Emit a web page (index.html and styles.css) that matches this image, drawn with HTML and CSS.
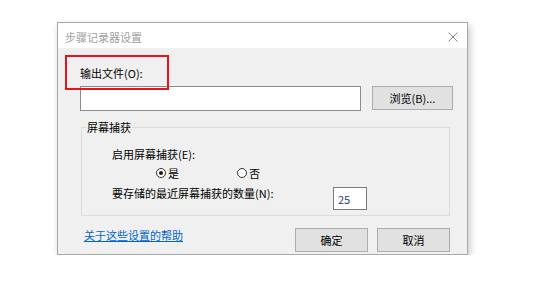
FILE: index.html
```html
<!DOCTYPE html>
<html lang="zh-CN">
<head>
    <meta charset="UTF-8">
    <title>步骤记录器设置</title>
    <link rel="stylesheet" href="styles.css">
</head>
<body>
    <div class="dialog">
        <div class="titlebar">
            <span class="title">步骤记录器设置</span>
            <svg class="close" width="10" height="10" viewBox="0 0 10 10">
                <path d="M0.5 0.5 L9.5 9.5 M9.5 0.5 L0.5 9.5" stroke="#8a8a8a" stroke-width="1" fill="none"/>
            </svg>
        </div>
        <div class="content">
            <div class="highlight"></div>
            <label class="field-label" for="output">输出文件(O):</label>
            <div class="file-row">
                <input type="text" id="output" class="textbox">
                <button class="btn browse">浏览(B)...</button>
            </div>
            <fieldset class="group">
                <legend>屏幕捕获</legend>
                <div class="group-body">
                    <div class="line">启用屏幕捕获(E):</div>
                    <div class="radios">
                        <span class="radio checked"><span class="dot"></span>是</span>
                        <span class="radio"><span class="dot"></span>否</span>
                    </div>
                    <div class="count-row">
                        <span class="count-label">要存储的最近屏幕捕获的数量(N):</span>
                        <input type="text" class="textbox count" value="25">
                    </div>
                </div>
            </fieldset>
            <div class="footer">
                <a href="#" class="help">关于这些设置的帮助</a>
                <div class="buttons">
                    <button class="btn">确定</button>
                    <button class="btn">取消</button>
                </div>
            </div>
        </div>
    </div>
</body>
</html>
```

FILE: styles.css
```css
body {
    margin: 0;
    background-color: #ffffff;
    font-family: "Noto Sans CJK SC", "Microsoft YaHei", sans-serif;
    font-size: 11px;
    line-height: 14px;
    color: #000000;
}
.dialog {
    margin: 22px 0 0 57px;
    width: 409px;
    border: 1px solid #a9a9a9;
    box-shadow: 2px 3px 7px rgba(0, 0, 0, 0.22);
}
.titlebar {
    height: 25px;
    background-color: #ffffff;
    display: flex;
    align-items: center;
    justify-content: space-between;
    padding: 0 9px 0 7px;
}
.title {
    color: #a0a0a0;
    margin-top: 2px;
}
.close {
    display: block;
    margin-top: 2px;
}
.content {
    position: relative;
    background-color: #f0f0f0;
    padding: 18px 17px 2px 22px;
}
.highlight {
    position: absolute;
    top: 7px;
    left: 7px;
    width: 100px;
    height: 31px;
    border: 2.5px solid #e8141c;
}
.field-label {
    display: block;
    height: 14px;
}
.file-row {
    display: flex;
    align-items: flex-start;
    margin-top: 6px;
    margin-right: -3px;
}
.textbox {
    box-sizing: border-box;
    height: 25px;
    flex: 1;
    margin: 0;
    border: 1px solid #8c8c8c;
    background-color: #ffffff;
    font: inherit;
    padding: 0 4px;
}
.btn {
    box-sizing: border-box;
    width: 73px;
    height: 24px;
    margin: 0;
    padding: 0;
    border: 1px solid #adadad;
    background-color: #e1e1e1;
    font: inherit;
    color: #000000;
}
.browse {
    width: 81px;
    margin-left: 11px;
}
.group {
    margin: 9px 0 0 1px;
    padding: 0 0 5px 0;
    border: 1px solid #dcdcdc;
}
.group legend {
    padding: 0 1px;
    margin-left: 4px;
    line-height: 14px;
}
.group-body {
    padding: 13px 0 0 30px;
}
.line {
    height: 14px;
}
.radios {
    display: flex;
    margin-top: 5px;
    padding-left: 44px;
    height: 14px;
}
.radio {
    display: flex;
    align-items: center;
    width: 81px;
}
.dot {
    box-sizing: border-box;
    width: 10px;
    height: 10px;
    border: 1px solid #333333;
    border-radius: 50%;
    background-color: #ffffff;
    margin-right: 2px;
    position: relative;
}
.radio.checked .dot::after {
    content: "";
    position: absolute;
    left: 2px;
    top: 2px;
    width: 4px;
    height: 4px;
    border-radius: 50%;
    background-color: #1a1a1a;
}
.count-row {
    display: flex;
    align-items: flex-start;
    margin-top: 6px;
}
.count-label {
    width: 221px;
}
.textbox.count {
    flex: none;
    width: 34px;
    height: 23px;
    margin-top: 1px;
    border-color: #7a7a7a;
    color: #1e3a6e;
}
.footer {
    display: flex;
    justify-content: space-between;
    align-items: flex-start;
    margin-top: 12px;
}
.help {
    margin-left: 4px;
    color: #0066cc;
    text-decoration: underline;
}
.buttons {
    display: flex;
    gap: 9px;
}
```
